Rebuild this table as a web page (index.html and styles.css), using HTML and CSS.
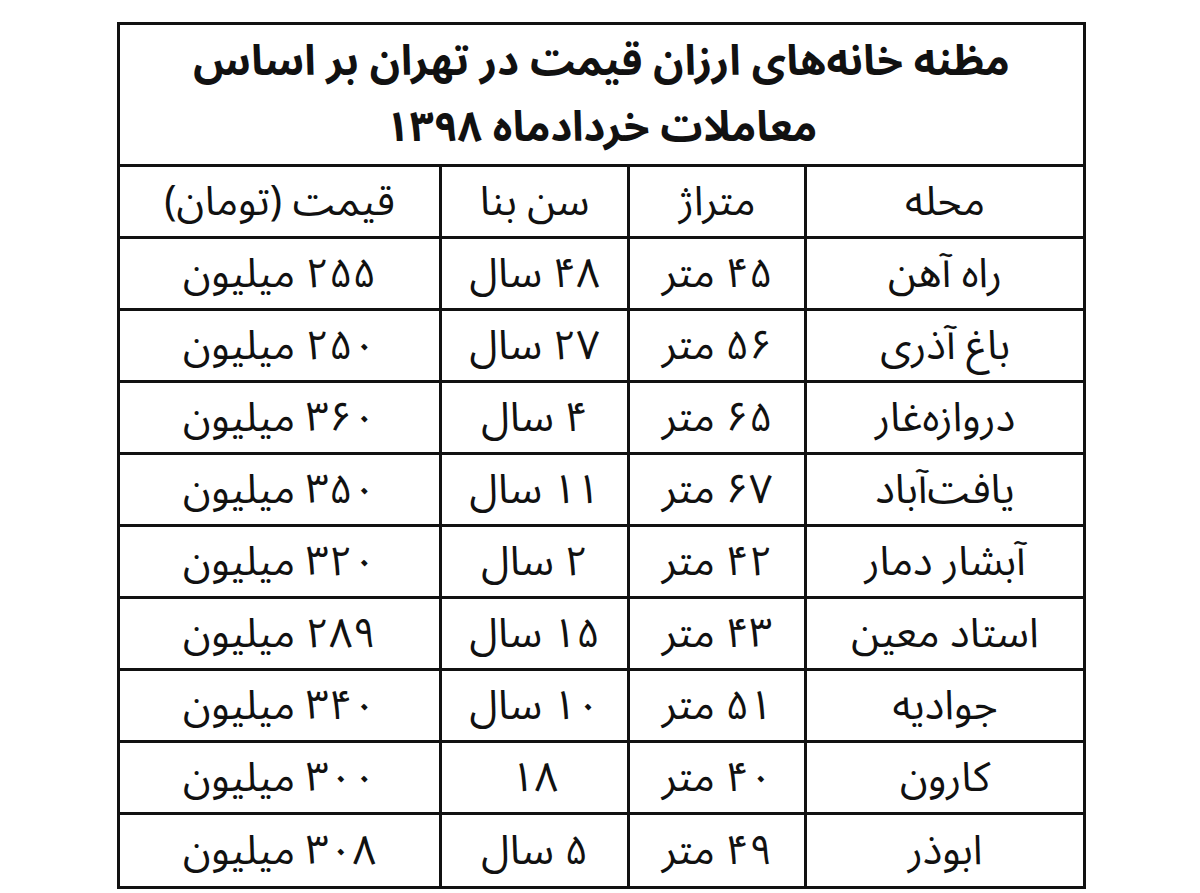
FILE: index.html
```html
<!DOCTYPE html>
<html lang="fa" dir="rtl">
<head>
<meta charset="utf-8">
<title>مظنه خانه‌های ارزان قیمت در تهران</title>
<link rel="stylesheet" href="styles.css">
</head>
<body>
<div class="page">
<table class="prices">
<colgroup>
<col class="c-hood"><col class="c-area"><col class="c-age"><col class="c-price">
</colgroup>
<thead>
<tr class="title-row"><th colspan="4"><div class="title"><div class="title-line">مظنه خانه‌های ارزان قیمت در تهران بر اساس</div><div class="title-line">معاملات خردادماه ۱۳۹۸</div></div></th></tr>
<tr class="head-row"><th>محله</th><th>متراژ</th><th>سن بنا</th><th>قیمت (تومان)</th></tr>
</thead>
<tbody>
<tr><td>راه آهن</td><td>۴۵ متر</td><td>۴۸ سال</td><td>۲۵۵ میلیون</td></tr>
<tr><td>باغ آذری</td><td>۵۶ متر</td><td>۲۷ سال</td><td>۲۵۰ میلیون</td></tr>
<tr><td>دروازه‌غار</td><td>۶۵ متر</td><td>۴ سال</td><td>۳۶۰ میلیون</td></tr>
<tr><td>یافت‌آباد</td><td>۶۷ متر</td><td>۱۱ سال</td><td>۳۵۰ میلیون</td></tr>
<tr><td>آبشار دمار</td><td>۴۲ متر</td><td>۲ سال</td><td>۳۲۰ میلیون</td></tr>
<tr><td>استاد معین</td><td>۴۳ متر</td><td>۱۵ سال</td><td>۲۸۹ میلیون</td></tr>
<tr><td>جوادیه</td><td>۵۱ متر</td><td>۱۰ سال</td><td>۳۴۰ میلیون</td></tr>
<tr><td>کارون</td><td>۴۰ متر</td><td>۱۸</td><td>۳۰۰ میلیون</td></tr>
<tr class="last-row"><td>ابوذر</td><td>۴۹ متر</td><td>۵ سال</td><td>۳۰۸ میلیون</td></tr>
</tbody>
</table>
</div>
</body>
</html>
```
FILE: styles.css
```css
html, body {
  margin: 0;
  padding: 0;
  background: #ffffff;
}
.page {
  padding: 22px 0 0 117px;
  direction: ltr;
}
.prices {
  direction: rtl;
  border-collapse: collapse;
  table-layout: fixed;
  width: 966px;
  font-family: "Noto Sans Arabic", "Noto Naskh Arabic", "DejaVu Sans", sans-serif;
  color: #111111;
  border: 3px solid #111111;
}
.c-hood { width: 279px; }
.c-area { width: 177px; }
.c-age { width: 188px; }
.c-price { width: 322px; }
.prices th, .prices td {
  border: 3px solid #111111;
  text-align: center;
  vertical-align: middle;
  padding: 0;
  font-size: 41px;
  line-height: 44px;
  font-weight: normal;
  height: 69px;
  white-space: nowrap;
}
.last-row td {
  height: 71px;
}
.title-row th {
  height: 139px;
}
.title {
  display: flex;
  flex-direction: column;
  align-items: center;
  gap: 20px;
  font-weight: bold;
  font-size: 42px;
  line-height: 46px;
}
```
